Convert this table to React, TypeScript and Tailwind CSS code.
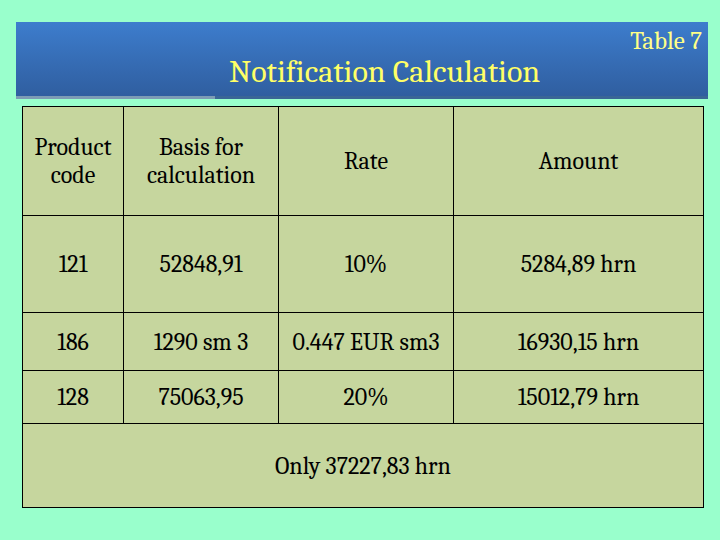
export default function App() {
  const rows = [
    ["121", "52848,91", "10%", "5284,89 hrn", "h-[97px]"],
    ["186", "1290 sm 3", "0.447 EUR sm3", "16930,15 hrn", "h-[58px]"],
    ["128", "75063,95", "20%", "15012,79 hrn", "h-[53px]"],
  ];
  const cell =
    "border-[1.5px] border-black p-0 text-center align-middle font-serif text-[24px] leading-[28px] text-black";

  return (
    <div className="h-[540px] w-[720px] overflow-hidden bg-[#99ffcc] pt-[22px] font-serif">
      {/* title band */}
      <div className="ml-[16px] flex h-[77px] w-[692px] flex-col bg-gradient-to-b from-[#3d7dcd] to-[#2f5d9e]">
        <div className="flex justify-end pr-[6px] pt-[5px] font-serif text-[25px] leading-[28px] text-[#ffff88]">
          Table 7
        </div>
        <div className="pl-[213px] font-serif text-[32px] leading-[34px] text-[#ffff66]">
          Notification Calculation
        </div>
        <div className="mt-auto flex h-[3px]">
          <div className="w-[199px] bg-[#7d9cb5]" />
          <div className="flex-1 bg-[#3a6696]" />
        </div>
      </div>

      <table className="ml-[22px] mt-[7px] w-[681px] table-fixed border-collapse bg-[#c6d69e]">
        <colgroup>
          <col className="w-[101px]" />
          <col className="w-[155px]" />
          <col className="w-[175px]" />
          <col className="w-[250px]" />
        </colgroup>
        <tbody>
          <tr className="h-[109px]">
            <td className={cell}>
              Product
              <br />
              code
            </td>
            <td className={cell}>
              Basis for
              <br />
              calculation
            </td>
            <td className={cell}>Rate</td>
            <td className={cell}>Amount</td>
          </tr>
          {rows.map((r) => (
            <tr key={r[0]} className={r[4]}>
              <td className={cell}>{r[0]}</td>
              <td className={cell}>{r[1]}</td>
              <td className={cell}>{r[2]}</td>
              <td className={cell}>{r[3]}</td>
            </tr>
          ))}
          <tr className="h-[84px]">
            <td colSpan={4} className={cell}>
              Only 37227,83 hrn
            </td>
          </tr>
        </tbody>
      </table>
    </div>
  );
}
